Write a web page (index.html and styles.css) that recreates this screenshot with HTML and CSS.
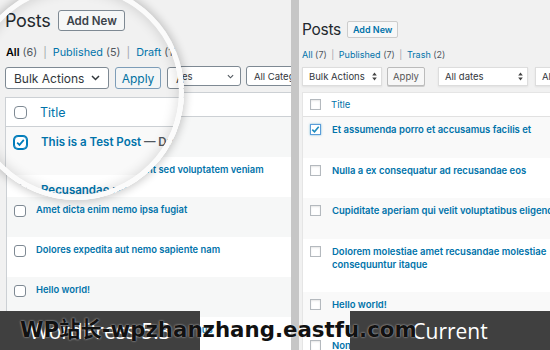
FILE: index.html
```html
<!DOCTYPE html>
<html lang="en">
<head>
<meta charset="utf-8">
<title>Posts comparison</title>
<link rel="stylesheet" href="styles.css">
</head>
<body>
<div class="stage">
  <section class="n-panel">
    <div class="n-head">
      <h1 class="n-h1">Posts</h1>
      <span class="n-add">Add New</span>
    </div>
    <div class="n-filters"><b>All</b> <span class="cnt">(6)</span> <span class="sep">|</span> <a>Published</a> <span class="cnt">(5)</span> <span class="sep">|</span> <a>Draft</a> <span class="cnt">(1)</span></div>
    <div class="n-toolbar">
      <div class="n-sel n-bulk"><span>Bulk Actions</span><svg width="7" height="5" viewBox="0 0 8 5"><path d="M1 1l3 3 3-3" stroke="#50575e" stroke-width="1.3" fill="none"/></svg></div>
      <div class="n-apply">Apply</div>
      <div class="n-sel n-dates"><span>All dates</span><svg width="7" height="5" viewBox="0 0 8 5"><path d="M1 1l3 3 3-3" stroke="#50575e" stroke-width="1.3" fill="none"/></svg></div>
      <div class="n-sel n-cat"><span>All Categories</span></div>
    </div>
    <div class="n-table">
      <div class="n-thead"><span class="n-cb"></span><span class="n-th">Title</span></div>
      <div class="n-row alt"><span class="n-cb"></span><span class="n-title">This is a Test Post <span class="state">— Draft</span></span></div>
      <div class="n-row"><span class="n-cb"></span><span class="n-title">Recusandae reprehenderit sed voluptatem veniam</span></div>
      <div class="n-row alt"><span class="n-cb"></span><span class="n-title">Amet dicta enim nemo ipsa fugiat</span></div>
      <div class="n-row"><span class="n-cb"></span><span class="n-title">Dolores expedita aut nemo sapiente nam</span></div>
      <div class="n-row alt"><span class="n-cb"></span><span class="n-title">Hello world!</span></div>
      <div class="n-row"><span class="n-cb"></span><span class="n-title">Quibusdam et repudiandae accusamus</span></div>
    </div>
  </section>

  <div class="divider"></div>

  <section class="o-panel">
    <div class="o-head">
      <h1 class="o-h1">Posts</h1>
      <span class="o-add">Add New</span>
    </div>
    <div class="o-filters"><a>All</a> <span class="cnt">(7)</span> <span class="sep">|</span> <a>Published</a> <span class="cnt">(7)</span> <span class="sep">|</span> <a>Trash</a> <span class="cnt">(2)</span></div>
    <div class="o-toolbar">
      <div class="o-sel o-bulk"><span>Bulk Actions</span><svg width="5" height="9" viewBox="0 0 5 9"><path d="M2.5 0.5L4.8 3.6H0.2z M2.5 8.5L0.2 5.4h4.6z" fill="#444"/></svg></div>
      <div class="o-apply">Apply</div>
      <div class="o-sel o-dates"><span>All dates</span><svg width="5" height="9" viewBox="0 0 5 9"><path d="M2.5 0.5L4.8 3.6H0.2z M2.5 8.5L0.2 5.4h4.6z" fill="#444"/></svg></div>
      <div class="o-sel o-cat"><span>All Categories</span></div>
    </div>
    <div class="o-table">
      <div class="o-thead"><span class="o-cb"></span><span class="o-th">Title</span></div>
      <div class="o-row alt"><span class="o-cb checked"><svg width="11" height="11" viewBox="0 0 11 11"><path d="M2.3 5.6l2.2 2.2 4.2-5" stroke="#1e8cbe" stroke-width="1.6" fill="none"/></svg></span><span class="o-title">Et assumenda porro et accusamus facilis et</span></div>
      <div class="o-row"><span class="o-cb"></span><span class="o-title">Nulla a ex consequatur ad recusandae eos</span></div>
      <div class="o-row alt"><span class="o-cb"></span><span class="o-title">Cupiditate aperiam qui velit voluptatibus eligendi</span></div>
      <div class="o-row"><span class="o-cb"></span><span class="o-title">Dolorem molestiae amet recusandae molestiae consequuntur itaque</span></div>
      <div class="o-row alt"><span class="o-cb"></span><span class="o-title">Hello world!</span></div>
      <div class="o-row"><span class="o-cb"></span><span class="o-title">Non molestiae voluptatem</span></div>
    </div>
  </section>

  <div class="magnifier">
    <div class="m-content">
      <div class="m-head">
        <h1 class="m-h1">Posts</h1>
        <span class="m-add">Add New</span>
      </div>
      <div class="m-filters"><b>All</b> <span class="cnt">(6)</span> <span class="sep">|</span> <a>Published</a> <span class="cnt">(5)</span> <span class="sep">|</span> <a>Draft</a> <span class="cnt">(1)</span></div>
      <div class="m-toolbar">
        <div class="m-sel m-bulk"><span>Bulk Actions</span><svg width="9" height="6" viewBox="0 0 9 6"><path d="M1 1l3.5 3.5L8 1" stroke="#32373c" stroke-width="1.5" fill="none"/></svg></div>
        <div class="m-apply">Apply</div>
        <div class="m-sel m-dates"><span>All dates</span></div>
      </div>
      <div class="m-table">
        <div class="m-thead"><span class="m-cb"></span><span class="m-th">Title</span></div>
        <div class="m-row alt"><span class="m-cb checked"><svg width="11" height="11" viewBox="0 0 11 11"><path d="M2.2 5.6l2.3 2.3 4.3-5" stroke="#007cba" stroke-width="1.7" fill="none"/></svg></span><span class="m-title">This is a Test Post <span class="state">— Draft</span></span></div>
        <div class="m-row"><span class="m-cb"></span><span class="m-title">Recusandae reprehenderit sed voluptatem veniam</span></div>
        <div class="m-row alt"><span class="m-cb"></span><span class="m-title">Amet dicta enim nemo ipsa fugiat</span></div>
      </div>
    </div>
  </div>

  <div class="label label-left">WordPress 5.3</div>
  <div class="label label-right">Current</div>
  <div class="watermark">WP站长-wpzhanzhang.eastfu.com</div>
</div>
</body>
</html>
```

FILE: styles.css
```css
html, body {
  margin: 0;
  padding: 0;
  background: #f1f1f1;
}

.stage {
  position: relative;
  width: 550px;
  height: 350px;
  overflow: hidden;
  display: flex;
  font-family: Inter, "Noto Sans", sans-serif;
  color: #32373c;
}

a { color: #0073aa; text-decoration: none; }
.cnt { color: #50575e; }
.sep { color: #a0a5aa; margin: 0 2px; }

/* ---------- WordPress 5.3 (left, normal scale) ---------- */
.n-panel {
  width: 291px;
  flex: none;
  background: #f1f1f1;
  overflow: hidden;
  padding-left: 6px;
  box-sizing: border-box;
}
.n-head {
  height: 45px;
  padding-top: 14px;
  box-sizing: border-box;
  display: flex;
  align-items: center;
  gap: 7px;
}
.n-h1 { margin: 0; font-size: 15.5px; font-weight: 400; line-height: 20px; letter-spacing: -0.3px; color: #23282d; }
.n-add {
  font-size: 9px; font-weight: 600; color: #32373c;
  border: 1px solid #7e8993; border-radius: 3px; background: #f3f5f6;
  padding: 2px 5px;
}
.n-filters { height: 20px; line-height: 20px; font-size: 9px; white-space: nowrap; }
.n-filters b { font-weight: 600; color: #000; }
.n-toolbar { margin-top: 1px; height: 20px; display: flex; gap: 4px; }
.n-sel {
  height: 20px; box-sizing: border-box;
  border: 1px solid #7e8993; border-radius: 3px; background: #fff;
  font-size: 9.5px; color: #32373c;
  padding: 0 6px 0 7px;
  display: flex; align-items: center; justify-content: space-between;
  white-space: nowrap; flex: none; overflow: hidden;
}
.n-bulk { width: 86px; }
.n-apply {
  width: 38px; height: 20px; box-sizing: border-box; flex: none;
  border: 1px solid #0071a1; border-radius: 3px; background: #f3f5f6;
  color: #0071a1; font-size: 9.5px;
  display: flex; align-items: center; justify-content: center;
}
.n-dates { width: 95px; margin-left: 8px; }
.n-cat { width: 100px; margin-left: 1px; }

.n-table {
  margin-top: 6px;
  width: 330px;
  border: 1px solid #ccd0d4;
  border-right: none;
  background: #fff;
}
.n-thead {
  height: 23px;
  border-bottom: 1px solid #ccd0d4;
  display: flex; align-items: center;
  padding-left: 7px; gap: 10px;
}
.n-th { font-size: 9.5px; color: #0073aa; }
.n-cb {
  width: 12px; height: 12px; box-sizing: border-box; flex: none;
  border: 1px solid #7e8993; border-radius: 3px; background: #fff;
}
.n-row {
  height: 40px; box-sizing: border-box;
  padding: 7px 0 0 7px;
  display: flex; align-items: flex-start; gap: 10px;
}
.n-row .n-cb { margin-top: 1px; }
.n-row.alt { background: #f6f7f7; }
.n-title { font-size: 9.4px; line-height: 12px; font-weight: 600; color: #0073aa; white-space: nowrap; }
.state { color: #50575e; }

/* ---------- divider ---------- */
.divider { width: 8px; flex: none; background: #c6c6c6; }

/* ---------- Current (right) ---------- */
.o-panel {
  flex: 1; min-width: 0;
  background: #f1f1f1;
  overflow: hidden;
  padding-left: 3px;
}
.o-head {
  height: 45px;
  padding-top: 14px;
  box-sizing: border-box;
  display: flex; align-items: center; gap: 6px;
}
.o-h1 { margin: 0; font-size: 15.5px; font-weight: 400; line-height: 20px; letter-spacing: -0.3px; color: #23282d; }
.o-add {
  height: 17px; box-sizing: border-box;
  display: flex; align-items: center;
  padding: 0 5px;
  font-size: 9px; font-weight: 600; color: #0073aa;
  background: #f7f7f7; border: 1px solid #ccc; border-radius: 2px;
}
.o-filters { height: 20px; line-height: 20px; font-size: 9px; white-space: nowrap; }
.o-toolbar { margin-top: 1px; height: 20px; display: flex; align-items: center; }
.o-sel {
  height: 19px; box-sizing: border-box; flex: none;
  border: 1px solid #ddd; background: #fff;
  box-shadow: 0 1px 2px rgba(0,0,0,.07);
  font-size: 9.5px; color: #32373c;
  padding: 0 4px 0 6px;
  display: flex; align-items: center; justify-content: space-between;
  white-space: nowrap; overflow: hidden;
}
.o-bulk { width: 80px; }
.o-apply {
  width: 38px; height: 19px; box-sizing: border-box; flex: none;
  margin-left: 5px;
  border: 1px solid #bbb; border-radius: 2px; background: #f7f7f7;
  box-shadow: 0 1px 0 #ccc;
  color: #555; font-size: 9.5px;
  display: flex; align-items: center; justify-content: center;
}
.o-dates { width: 90px; margin-left: 13px; }
.o-cat { width: 90px; margin-left: 7px; }

.o-table {
  margin-top: 6px;
  width: 300px;
  border: 1px solid #e5e5e5;
  border-right: none;
  background: #fff;
}
.o-thead {
  height: 23px;
  border-bottom: 1px solid #e1e1e1;
  display: flex; align-items: center;
  padding-left: 7px; gap: 10px;
}
.o-th { font-size: 9.5px; color: #0073aa; }
.o-cb {
  width: 11px; height: 11px; box-sizing: border-box; flex: none;
  border: 1px solid #b4b9be; background: #fff;
  box-shadow: inset 0 1px 2px rgba(0,0,0,.1);
  display: flex; align-items: center; justify-content: center;
}
.o-cb.checked { border-color: #5b9dd9; box-shadow: 0 0 2px rgba(30,140,190,.6); }
.o-cb svg { flex: none; }
.o-row {
  padding: 6px 0 21.5px 7px;
  display: flex; align-items: flex-start; gap: 11px;
}
.o-row .o-cb { margin-top: 1px; }
.o-row.alt { background: #f9f9f9; }
.o-title { width: 250px; font-size: 9.5px; line-height: 13px; font-weight: 600; color: #0073aa; }

/* ---------- magnifier overlay ---------- */
.magnifier {
  position: absolute;
  left: -32px;
  top: -16px;
  width: 216px;
  height: 216px;
  border-radius: 50%;
  overflow: hidden;
  box-shadow: 0 0 8px 2px rgba(0,0,0,.2);
  z-index: 2;
}
.magnifier::after {
  content: "";
  position: absolute;
  inset: 0;
  border-radius: 50%;
  border: 5px solid #fbfbfb;
  box-shadow: inset 0 0 12px 2px rgba(0,0,0,.12);
}
.m-content {
  position: absolute;
  left: 32px;
  top: 16px;
  width: 320px;
  height: 240px;
  background: #f1f1f1;
  padding-left: 5px;
  box-sizing: border-box;
}
.m-head {
  padding-top: 10px;
  height: 31px;
  box-sizing: border-box;
  display: flex; align-items: center; gap: 8px;
}
.m-h1 { margin: 0; font-size: 18px; font-weight: 400; line-height: 21px; letter-spacing: -0.3px; color: #23282d; }
.m-add {
  height: 21px; box-sizing: border-box;
  display: flex; align-items: center;
  padding: 0 7px;
  font-size: 11.5px; font-weight: 600; color: #3c434a;
  background: #f6f7f7; border: 1px solid #7e8993; border-radius: 3px;
}
.m-filters { margin-top: 15px; height: 14px; line-height: 14px; font-size: 10.8px; white-space: nowrap; padding-left: 1px; }
.m-filters b { font-weight: 600; color: #000; }
.m-filters .sep { margin: 0 3px; }
.m-toolbar { margin-top: 7px; height: 22px; display: flex; gap: 6px; }
.m-sel {
  height: 22px; box-sizing: border-box; flex: none;
  border: 1px solid #7e8993; border-radius: 3px; background: #fff;
  font-size: 12px; color: #32373c;
  padding: 0 8px 0 8px;
  display: flex; align-items: center; justify-content: space-between;
  white-space: nowrap;
}
.m-bulk { width: 104px; }
.m-apply {
  width: 46px; height: 22px; box-sizing: border-box; flex: none;
  border: 1px solid #7d9db8; border-radius: 3px; background: #f3f5f6;
  color: #0071a1; font-size: 12px;
  display: flex; align-items: center; justify-content: center;
}
.m-dates { width: 110px; }
.m-table {
  margin-top: 8px;
  width: 320px;
  border: 1px solid #ccd0d4;
  border-right: none;
  background: #fff;
}
.m-thead {
  height: 28px;
  border-bottom: 1px solid #ccd0d4;
  display: flex; align-items: center;
  padding-left: 8px; gap: 13px;
}
.m-th { font-size: 12.5px; color: #0073aa; }
.m-cb {
  width: 13px; height: 13px; box-sizing: border-box; flex: none;
  border: 1px solid #7e8993; border-radius: 4px; background: #fff;
  display: flex; align-items: center; justify-content: center;
}
.m-cb.checked { border-color: #007cba; box-shadow: 0 0 0 1px #007cba; }
.m-cb svg { flex: none; }
.m-row {
  height: 48px; box-sizing: border-box;
  padding: 7px 0 0 8px;
  display: flex; align-items: flex-start; gap: 14px;
}
.m-row .m-cb { margin-top: 1.5px; }
.m-row.alt { background: #f9f9f9; }
.m-title { font-size: 11.5px; line-height: 16px; font-weight: 600; color: #0073aa; white-space: nowrap; }

/* ---------- caption overlays ---------- */
.label {
  position: absolute;
  bottom: 0;
  width: 200px;
  height: 39px;
  background: #404040;
  color: #fff;
  font-family: "Open Sans", "Noto Sans", sans-serif;
  font-size: 21px;
  display: flex; align-items: center; justify-content: center;
  z-index: 3;
}
.label-left { left: 0; }
.label-right { right: 0; }

.watermark {
  position: absolute;
  left: 20px;
  top: 319px;
  font-family: "DejaVu Sans", "Noto Sans CJK SC", sans-serif;
  font-weight: 700;
  font-size: 21.3px;
  line-height: 22px;
  color: #111;
  white-space: nowrap;
  text-shadow: 0 0 2px rgba(255,255,255,.8);
  z-index: 4;
}
```
